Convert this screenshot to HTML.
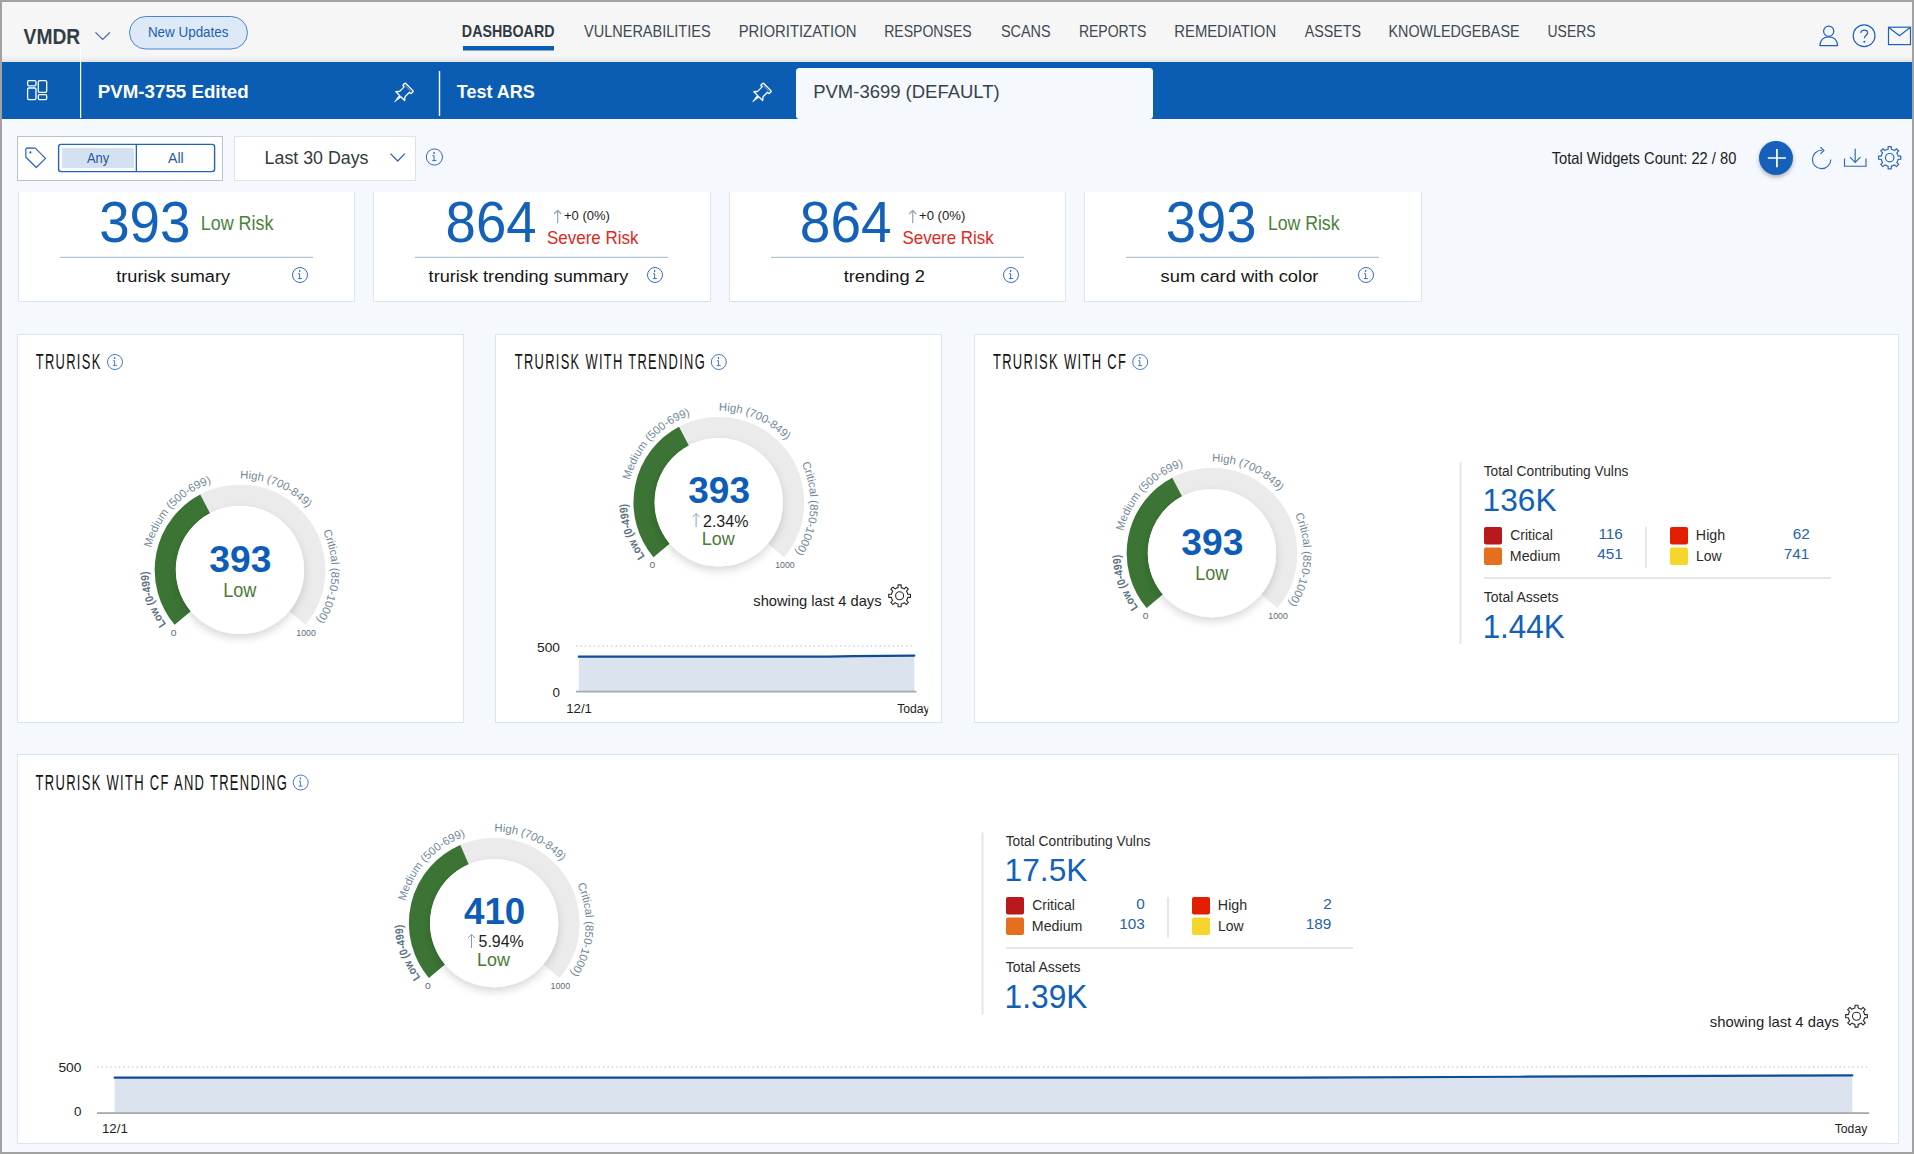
<!DOCTYPE html>
<html><head><meta charset="utf-8"><title>VMDR Dashboard</title>
<style>
html,body{margin:0;padding:0;}
body{width:1914px;height:1154px;overflow:hidden;background:#f5f8fc;position:relative;font-family:'Liberation Sans', sans-serif;}
.p{position:absolute;overflow:hidden;}
.p svg{position:absolute;left:0;top:0;display:block;font-family:'Liberation Sans', sans-serif;}
.hdr{background:#f6f6f6;}
.hdr:after{content:"";position:absolute;left:0;right:0;bottom:0;height:6px;background:linear-gradient(#f6f6f6,#e2e4e6);}
.hdr svg{z-index:1}
.frame{position:absolute;left:0;top:0;width:1914px;height:1154px;box-sizing:border-box;border:2px solid #a2a2a2;pointer-events:none;z-index:10;}
</style></head><body>
<svg width="0" height="0" style="position:absolute"><defs>
<filter id="gsh" x="-30%" y="-30%" width="160%" height="170%"><feDropShadow dx="0" dy="4" stdDeviation="4" flood-color="#000" flood-opacity="0.16"/></filter>
<filter id="bsh" x="-40%" y="-40%" width="180%" height="190%"><feDropShadow dx="0" dy="2" stdDeviation="2" flood-color="#000" flood-opacity="0.3"/></filter>
</defs></svg>
<div class="p hdr" style="left:2px;top:2px;width:1910px;height:60px;"><svg width="1910" height="60" viewBox="2 2 1910 60"><text x="23.60" y="44.20" font-size="21.80" fill="#333d47" font-weight="bold" textLength="56.67" lengthAdjust="spacingAndGlyphs">VMDR</text><path d="M95.5,32.3 L102.7,39.5 L109.9,32.3" fill="none" stroke="#3a64b0" stroke-width="1.2"/><rect x="129.5" y="16.5" width="118" height="32.5" rx="16.25" fill="#dde9f6" stroke="#4a86c8" stroke-width="1"/><text x="147.93" y="36.70" font-size="13.80" fill="#1f5fae" textLength="80.52" lengthAdjust="spacingAndGlyphs">New Updates</text><text x="461.87" y="37.40" font-size="17.00" fill="#2f3a44" font-weight="bold" textLength="92.63" lengthAdjust="spacingAndGlyphs">DASHBOARD</text><text x="584.00" y="37.40" font-size="17.00" fill="#3d4852" textLength="126.59" lengthAdjust="spacingAndGlyphs">VULNERABILITIES</text><text x="738.71" y="37.40" font-size="17.00" fill="#3d4852" textLength="117.82" lengthAdjust="spacingAndGlyphs">PRIORITIZATION</text><text x="884.18" y="37.40" font-size="17.00" fill="#3d4852" textLength="87.45" lengthAdjust="spacingAndGlyphs">RESPONSES</text><text x="1000.95" y="37.40" font-size="17.00" fill="#3d4852" textLength="49.63" lengthAdjust="spacingAndGlyphs">SCANS</text><text x="1078.88" y="37.40" font-size="17.00" fill="#3d4852" textLength="67.50" lengthAdjust="spacingAndGlyphs">REPORTS</text><text x="1174.31" y="37.40" font-size="17.00" fill="#3d4852" textLength="101.81" lengthAdjust="spacingAndGlyphs">REMEDIATION</text><text x="1304.70" y="37.40" font-size="17.00" fill="#3d4852" textLength="56.39" lengthAdjust="spacingAndGlyphs">ASSETS</text><text x="1388.56" y="37.40" font-size="17.00" fill="#3d4852" textLength="130.87" lengthAdjust="spacingAndGlyphs">KNOWLEDGEBASE</text><text x="1547.55" y="37.40" font-size="17.00" fill="#3d4852" textLength="48.01" lengthAdjust="spacingAndGlyphs">USERS</text><rect x="463" y="46" width="91" height="4.5" fill="#0b5db4"/><circle cx="1828.7" cy="31.3" r="5.1" fill="none" stroke="#1f5fb8" stroke-width="1.2"/><path d="M1819.9,45.6 C1820.3,39.8 1824,37 1828.7,37 C1833.4,37 1837.2,39.8 1837.6,45.6 Z" fill="none" stroke="#1f5fb8" stroke-width="1.2" stroke-linejoin="round"/><circle cx="1864.1" cy="35.7" r="10.9" fill="none" stroke="#1f5fb8" stroke-width="1.15"/><path d="M1860.9,32.9 C1860.9,30.9 1862.4,30.1 1864.2,30.1 C1866.2,30.1 1867.6,31.3 1867.6,32.9 C1867.6,35.1 1864.4,35.5 1864.4,38.3" fill="none" stroke="#1f5fb8" stroke-width="1.2"/><circle cx="1864.3" cy="41.7" r="1" fill="#1f5fb8"/><rect x="1888.5" y="27.2" width="22" height="17.4" fill="none" stroke="#1f5fb8" stroke-width="1.2"/><path d="M1888.8,27.5 L1899.5,35.8 L1910.2,27.5" fill="none" stroke="#1f5fb8" stroke-width="1.2"/><rect x="80" y="47" width="1" height="15" fill="#fff"/></svg></div><div class="p tabs" style="left:2px;top:62px;width:1910px;height:57px;background:#0b5db4"><svg width="1910" height="57" viewBox="2 62 1910 57"><rect x="796" y="68" width="357" height="51" rx="3.5" fill="#f5f8fc"/><rect x="27.6" y="80.6" width="8.4" height="5.2" rx="1.3" fill="none" stroke="#fff" stroke-width="1.3"/><rect x="27.6" y="88" width="8.4" height="11.6" rx="1.3" fill="none" stroke="#fff" stroke-width="1.3"/><rect x="38.3" y="80.6" width="8.4" height="11.8" rx="1.3" fill="none" stroke="#fff" stroke-width="1.3"/><rect x="38.3" y="94.6" width="8.4" height="5" rx="1.3" fill="none" stroke="#fff" stroke-width="1.3"/><rect x="80" y="62" width="1.2" height="56" fill="#fff"/><rect x="438.8" y="71" width="1.4" height="45" fill="#fff"/><g transform="translate(394.6,101.8) rotate(45)"><path d="M-1.1,-8 H-6.2 L-4.6,-9.9 C-4.2,-10.4 -3.8,-10.6 -3.8,-11.3 V-17.3 H-5.3 C-5.9,-17.3 -5.9,-17.6 -5.9,-18.2 V-19.9 C-5.9,-20.5 -5.6,-20.8 -5,-20.8 H5 C5.6,-20.8 5.9,-20.5 5.9,-19.9 V-18.2 C5.9,-17.6 5.6,-17.3 5,-17.3 H3.8 V-11.3 C3.8,-10.6 4.2,-10.4 4.6,-9.9 L6.2,-8 H1.1" fill="none" stroke="#fff" stroke-width="1.35" stroke-linejoin="round"/><path d="M-1.3,-8.2 L0,0 L1.3,-8.2 Z" fill="#fff" stroke="#fff" stroke-width="0.6" stroke-linejoin="round"/><path d="M-4.6,-19 H4.6" stroke="#fff" stroke-width="0.7" opacity="0.6"/></g><g transform="translate(752.6,101.8) rotate(45)"><path d="M-1.1,-8 H-6.2 L-4.6,-9.9 C-4.2,-10.4 -3.8,-10.6 -3.8,-11.3 V-17.3 H-5.3 C-5.9,-17.3 -5.9,-17.6 -5.9,-18.2 V-19.9 C-5.9,-20.5 -5.6,-20.8 -5,-20.8 H5 C5.6,-20.8 5.9,-20.5 5.9,-19.9 V-18.2 C5.9,-17.6 5.6,-17.3 5,-17.3 H3.8 V-11.3 C3.8,-10.6 4.2,-10.4 4.6,-9.9 L6.2,-8 H1.1" fill="none" stroke="#fff" stroke-width="1.35" stroke-linejoin="round"/><path d="M-1.3,-8.2 L0,0 L1.3,-8.2 Z" fill="#fff" stroke="#fff" stroke-width="0.6" stroke-linejoin="round"/><path d="M-4.6,-19 H4.6" stroke="#fff" stroke-width="0.7" opacity="0.6"/></g><text x="97.78" y="97.80" font-size="18.90" fill="#ffffff" font-weight="bold" textLength="150.91" lengthAdjust="spacingAndGlyphs">PVM-3755 Edited</text><text x="456.82" y="97.80" font-size="18.90" fill="#ffffff" font-weight="bold" textLength="77.88" lengthAdjust="spacingAndGlyphs">Test ARS</text><text x="813.22" y="98.20" font-size="18.90" fill="#36424d" textLength="186.41" lengthAdjust="spacingAndGlyphs">PVM-3699 (DEFAULT)</text></svg></div><div class="p fbar" style="left:0px;top:118px;width:1914px;height:74px;"><svg width="1914" height="74" viewBox="0 118 1914 74"><rect x="17.5" y="136.5" width="205" height="44" fill="#fff" stroke="#b8c3cc" stroke-width="1"/><path d="M25.8,149.5 C25.8,148.5 26.5,147.9 27.5,147.9 L35.3,148.1 L45.5,158.3 L36.3,167.5 L25.9,157.2 Z" fill="none" stroke="#2b63b6" stroke-width="1.2" stroke-linejoin="round"/><circle cx="30.4" cy="152.4" r="1.1" fill="#2b63b6"/><rect x="58.6" y="144.4" width="156" height="27.2" rx="2.5" fill="#fff" stroke="#1f63bd" stroke-width="1.4"/><rect x="62" y="148" width="72" height="20" fill="#d3e1f0"/><rect x="135.7" y="144.4" width="1.3" height="27.2" fill="#1f63bd"/><text x="86.90" y="162.90" font-size="14.70" fill="#27599e" textLength="22.28" lengthAdjust="spacingAndGlyphs">Any</text><text x="168.00" y="162.90" font-size="14.70" fill="#27599e" textLength="15.67" lengthAdjust="spacingAndGlyphs">All</text><rect x="234.5" y="136.5" width="181" height="44" fill="#fff" stroke="#dde3ea" stroke-width="1"/><text x="264.57" y="164.10" font-size="18.90" fill="#333a40" textLength="103.98" lengthAdjust="spacingAndGlyphs">Last 30 Days</text><path d="M390.5,153.6 L397.7,161 L404.9,153.6" fill="none" stroke="#3a64b0" stroke-width="1.3"/><circle cx="434.4" cy="157" r="8.1" fill="none" stroke="#3566b5" stroke-width="1"/><path d="M434.04999999999995,152.4 V153.6" stroke="#3566b5" stroke-width="1.3" stroke-linecap="round"/><path d="M432.5,155.7 H434.04999999999995 V160.5 M432.29999999999995,160.6 H436.29999999999995" fill="none" stroke="#3566b5" stroke-width="1"/><text x="1551.71" y="163.50" font-size="16.50" fill="#1c1c1c" textLength="184.65" lengthAdjust="spacingAndGlyphs">Total Widgets Count: 22 / 80</text><circle cx="1776" cy="158" r="17" fill="#1461b9" filter="url(#bsh)"/><path d="M1767.8,158 H1786 M1776.9,149 V167.2" stroke="#fff" stroke-width="1.7"/><path d="M1822,150.3 A9.2,9.2 0 1 0 1830.8,159.6" fill="none" stroke="#2e66b8" stroke-width="1.15"/><path d="M1820.4,147.1 L1823.9,150.5 L1820.4,153.9" fill="none" stroke="#2e66b8" stroke-width="1.15"/><path d="M1844.5,158.4 V166.2 H1866 V158.4 M1855.2,148.8 V162.4 M1850,157.2 L1855.2,162.4 L1860.4,157.2" fill="none" stroke="#2e66b8" stroke-width="1.15"/><path d="M1897.65,154.41 L1898.14,156.06 L1900.79,156.14 L1900.79,159.26 L1898.14,159.34 L1897.65,160.99 L1896.83,162.51 L1898.64,164.44 L1896.44,166.64 L1894.51,164.83 L1892.99,165.65 L1891.34,166.14 L1891.26,168.79 L1888.14,168.79 L1888.06,166.14 L1886.41,165.65 L1884.89,164.83 L1882.96,166.64 L1880.76,164.44 L1882.57,162.51 L1881.75,160.99 L1881.26,159.34 L1878.61,159.26 L1878.61,156.14 L1881.26,156.06 L1881.75,154.41 L1882.57,152.89 L1880.76,150.96 L1882.96,148.76 L1884.89,150.57 L1886.41,149.75 L1888.06,149.26 L1888.14,146.61 L1891.26,146.61 L1891.34,149.26 L1892.99,149.75 L1894.51,150.57 L1896.44,148.76 L1898.64,150.96 L1896.83,152.89Z" fill="none" stroke="#2e66b8" stroke-width="1.2" stroke-linejoin="round"/><circle cx="1889.7" cy="157.7" r="4.2" fill="none" stroke="#2e66b8" stroke-width="1.2"/></svg></div><div class="p sum" style="left:0px;top:192px;width:1914px;height:112px;"><svg width="1914" height="112" viewBox="0 192 1914 112"><path d="M18.5,192 V301.5 H354.5 V192" fill="#fff" stroke="#d8e5f3" stroke-width="1"/><text x="99.18" y="241.80" font-size="56.50" fill="#1461ba" textLength="91.30" lengthAdjust="spacingAndGlyphs">393</text><text x="200.77" y="230.00" font-size="19.50" fill="#4c7f3c" textLength="72.67" lengthAdjust="spacingAndGlyphs">Low Risk</text><rect x="60" y="256.8" width="253" height="1.2" fill="#b3c2cf"/><text x="116.23" y="281.70" font-size="17.40" fill="#151515" textLength="113.85" lengthAdjust="spacingAndGlyphs">trurisk sumary</text><circle cx="300" cy="275" r="7.5" fill="none" stroke="#3c6dbf" stroke-width="1"/><path d="M299.65,270.4 V271.6" stroke="#3c6dbf" stroke-width="1.3" stroke-linecap="round"/><path d="M298.1,273.7 H299.65 V278.5 M297.9,278.6 H301.9" fill="none" stroke="#3c6dbf" stroke-width="1"/><path d="M373.5,192 V301.5 H710.5 V192" fill="#fff" stroke="#d8e5f3" stroke-width="1"/><text x="445.62" y="241.80" font-size="56.50" fill="#1461ba" textLength="91.04" lengthAdjust="spacingAndGlyphs">864</text><path d="M557.7,223.3 V210.5 M554.1,214 L557.7,210.3 L561.3000000000001,214" fill="none" stroke="#8ea4b6" stroke-width="1.2"/><text x="564.02" y="219.60" font-size="13.70" fill="#1e1e1e" textLength="45.75" lengthAdjust="spacingAndGlyphs">+0 (0%)</text><text x="547.04" y="244.30" font-size="18.50" fill="#e0281c" textLength="91.39" lengthAdjust="spacingAndGlyphs">Severe Risk</text><rect x="415" y="256.8" width="253" height="1.2" fill="#b3c2cf"/><text x="428.63" y="281.70" font-size="17.40" fill="#151515" textLength="199.64" lengthAdjust="spacingAndGlyphs">trurisk trending summary</text><circle cx="655" cy="275" r="7.5" fill="none" stroke="#3c6dbf" stroke-width="1"/><path d="M654.65,270.4 V271.6" stroke="#3c6dbf" stroke-width="1.3" stroke-linecap="round"/><path d="M653.1,273.7 H654.65 V278.5 M652.9,278.6 H656.9" fill="none" stroke="#3c6dbf" stroke-width="1"/><path d="M729.5,192 V301.5 H1065.5 V192" fill="#fff" stroke="#d8e5f3" stroke-width="1"/><text x="799.80" y="241.80" font-size="56.50" fill="#1461ba" textLength="91.77" lengthAdjust="spacingAndGlyphs">864</text><path d="M912.7,223.3 V210.5 M909.1,214 L912.7,210.3 L916.3000000000001,214" fill="none" stroke="#8ea4b6" stroke-width="1.2"/><text x="919.01" y="219.60" font-size="13.70" fill="#1e1e1e" textLength="46.27" lengthAdjust="spacingAndGlyphs">+0 (0%)</text><text x="902.44" y="244.30" font-size="18.50" fill="#e0281c" textLength="91.39" lengthAdjust="spacingAndGlyphs">Severe Risk</text><rect x="771" y="256.8" width="253" height="1.2" fill="#b3c2cf"/><text x="843.73" y="281.70" font-size="17.40" fill="#151515" textLength="81.15" lengthAdjust="spacingAndGlyphs">trending 2</text><circle cx="1011" cy="275" r="7.5" fill="none" stroke="#3c6dbf" stroke-width="1"/><path d="M1010.65,270.4 V271.6" stroke="#3c6dbf" stroke-width="1.3" stroke-linecap="round"/><path d="M1009.1,273.7 H1010.65 V278.5 M1008.9,278.6 H1012.9" fill="none" stroke="#3c6dbf" stroke-width="1"/><path d="M1084.5,192 V301.5 H1421.5 V192" fill="#fff" stroke="#d8e5f3" stroke-width="1"/><text x="1165.80" y="241.80" font-size="56.50" fill="#1461ba" textLength="90.77" lengthAdjust="spacingAndGlyphs">393</text><text x="1267.89" y="230.00" font-size="19.50" fill="#4c7f3c" textLength="71.66" lengthAdjust="spacingAndGlyphs">Low Risk</text><rect x="1126" y="256.8" width="253" height="1.2" fill="#b3c2cf"/><text x="1160.54" y="281.70" font-size="17.40" fill="#151515" textLength="157.91" lengthAdjust="spacingAndGlyphs">sum card with color</text><circle cx="1366" cy="275" r="7.5" fill="none" stroke="#3c6dbf" stroke-width="1"/><path d="M1365.65,270.4 V271.6" stroke="#3c6dbf" stroke-width="1.3" stroke-linecap="round"/><path d="M1364.1,273.7 H1365.65 V278.5 M1363.9,278.6 H1367.9" fill="none" stroke="#3c6dbf" stroke-width="1"/></svg></div><div class="p w" style="left:17px;top:334px;width:447px;height:389px;"><svg width="447" height="389" viewBox="17 334 447 389"><rect x="17.5" y="334.5" width="446" height="388" fill="#fff" stroke="#d8e5f3" stroke-width="1"/><text transform="translate(35.74,369) scale(0.5934,1)" font-size="21.8" fill="#141414" letter-spacing="2.191">TRURISK</text><circle cx="115" cy="362" r="7.5" fill="none" stroke="#4a78c4" stroke-width="1"/><path d="M114.65,357.4 V358.6" stroke="#4a78c4" stroke-width="1.3" stroke-linecap="round"/><path d="M113.1,360.7 H114.65 V365.5 M112.9,365.6 H116.9" fill="none" stroke="#4a78c4" stroke-width="1"/><path d="M182.70,618.08 A74.8,74.8 0 1 1 297.30,618.08" fill="none" stroke="#ebebeb" stroke-width="21"/><path d="M182.70,618.08 A74.8,74.8 0 0 1 205.09,503.85" fill="none" stroke="#3b7434" stroke-width="21"/><circle cx="240" cy="570" r="64" fill="#fff" filter="url(#gsh)"/><path id="gp240_570" d="M169.91,628.82 A91.5,91.5 0 1 1 310.09,628.82" fill="none"/><text font-size="11.3" fill="#5a7083" font-weight="bold"><textPath href="#gp240_570" startOffset="5.9" textLength="56.5" lengthAdjust="spacingAndGlyphs">Low (0-499)</textPath></text><text font-size="11.3" fill="#71879a"><textPath href="#gp240_570" startOffset="85.9">Medium (500-699)</textPath></text><text font-size="11.3" fill="#71879a"><textPath href="#gp240_570" startOffset="207.3">High (700-849)</textPath></text><text font-size="11.3" fill="#71879a"><textPath href="#gp240_570" startOffset="310.9">Critical (850-1000)</textPath></text><text x="170.84" y="635.50" font-size="9.80" fill="#5d6b7a" textLength="5.73" lengthAdjust="spacingAndGlyphs">0</text><text x="296.34" y="635.50" font-size="9.80" fill="#5d6b7a" textLength="19.56" lengthAdjust="spacingAndGlyphs">1000</text><text x="209.25" y="572.00" font-size="37.00" fill="#0d5cb6" font-weight="bold" textLength="62.18" lengthAdjust="spacingAndGlyphs">393</text><text x="223.15" y="597.00" font-size="19.30" fill="#4a7a36" textLength="33.24" lengthAdjust="spacingAndGlyphs">Low</text></svg></div><div class="p w" style="left:495px;top:334px;width:447px;height:389px;"><svg width="447" height="389" viewBox="495 334 447 389"><rect x="495.5" y="334.5" width="446" height="388" fill="#fff" stroke="#d8e5f3" stroke-width="1"/><text transform="translate(514.74,369) scale(0.5926,1)" font-size="21.8" fill="#141414" letter-spacing="2.194">TRURISK WITH TRENDING</text><circle cx="718.8" cy="362" r="7.5" fill="none" stroke="#4a78c4" stroke-width="1"/><path d="M718.4499999999999,357.4 V358.6" stroke="#4a78c4" stroke-width="1.3" stroke-linecap="round"/><path d="M716.9,360.7 H718.4499999999999 V365.5 M716.6999999999999,365.6 H720.6999999999999" fill="none" stroke="#4a78c4" stroke-width="1"/><path d="M661.50,550.38 A74.8,74.8 0 1 1 776.10,550.38" fill="none" stroke="#ebebeb" stroke-width="21"/><path d="M661.50,550.38 A74.8,74.8 0 0 1 683.89,436.15" fill="none" stroke="#3b7434" stroke-width="21"/><circle cx="718.8" cy="502.3" r="64" fill="#fff" filter="url(#gsh)"/><path id="gp718_502" d="M648.71,561.12 A91.5,91.5 0 1 1 788.89,561.12" fill="none"/><text font-size="11.3" fill="#5a7083" font-weight="bold"><textPath href="#gp718_502" startOffset="5.9" textLength="56.5" lengthAdjust="spacingAndGlyphs">Low (0-499)</textPath></text><text font-size="11.3" fill="#71879a"><textPath href="#gp718_502" startOffset="85.9">Medium (500-699)</textPath></text><text font-size="11.3" fill="#71879a"><textPath href="#gp718_502" startOffset="207.3">High (700-849)</textPath></text><text font-size="11.3" fill="#71879a"><textPath href="#gp718_502" startOffset="310.9">Critical (850-1000)</textPath></text><text x="649.64" y="567.80" font-size="9.80" fill="#5d6b7a" textLength="5.73" lengthAdjust="spacingAndGlyphs">0</text><text x="775.14" y="567.80" font-size="9.80" fill="#5d6b7a" textLength="19.56" lengthAdjust="spacingAndGlyphs">1000</text><text x="688.31" y="503.10" font-size="36.50" fill="#0d5cb6" font-weight="bold" textLength="61.66" lengthAdjust="spacingAndGlyphs">393</text><path d="M696.0999999999999,527.1 V513.7 M692.4999999999999,517.2 L696.0999999999999,513.5 L699.6999999999999,517.2" fill="none" stroke="#8a9fb2" stroke-width="1.0"/><text x="703.00" y="526.50" font-size="16.00" fill="#1e1e1e" textLength="45.37" lengthAdjust="spacingAndGlyphs">2.34%</text><text x="701.71" y="545.30" font-size="18.50" fill="#4a7a36" textLength="32.93" lengthAdjust="spacingAndGlyphs">Low</text><text x="753.33" y="605.50" font-size="14.60" fill="#1e1e1e" textLength="128.21" lengthAdjust="spacingAndGlyphs">showing last 4 days</text><path d="M907.27,592.62 L907.75,594.22 L910.49,594.27 L910.49,597.33 L907.75,597.38 L907.27,598.98 L906.48,600.44 L908.38,602.42 L906.22,604.58 L904.24,602.68 L902.78,603.47 L901.18,603.95 L901.13,606.69 L898.07,606.69 L898.02,603.95 L896.42,603.47 L894.96,602.68 L892.98,604.58 L890.82,602.42 L892.72,600.44 L891.93,598.98 L891.45,597.38 L888.71,597.33 L888.71,594.27 L891.45,594.22 L891.93,592.62 L892.72,591.16 L890.82,589.18 L892.98,587.02 L894.96,588.92 L896.42,588.13 L898.02,587.65 L898.07,584.91 L901.13,584.91 L901.18,587.65 L902.78,588.13 L904.24,588.92 L906.22,587.02 L908.38,589.18 L906.48,591.16Z" fill="none" stroke="#2a2a2a" stroke-width="1.1" stroke-linejoin="round"/><circle cx="899.6" cy="595.8" r="4" fill="none" stroke="#2a2a2a" stroke-width="1.1"/><line x1="576" y1="646" x2="915" y2="646" stroke="#c9ced4" stroke-width="1.3" stroke-dasharray="1.3 3.1"/><path d="M578.8,691.5 V656.7 L806.9399999999999,656.7 C849.8839999999999,656.7 860.6199999999999,655.6 914.3,655.6 V691.5 Z" fill="#dbe4ee"/><path d="M578.8,656.7 L806.9399999999999,656.7 C849.8839999999999,656.7 860.6199999999999,655.6 914.3,655.6" fill="none" stroke="#0f4c97" stroke-width="2.2" stroke-linecap="round"/><rect x="576" y="690.7" width="340.5" height="1.8" fill="#a8a8a8"/><text x="537.05" y="651.60" font-size="13.40" fill="#1e1e1e" textLength="22.98" lengthAdjust="spacingAndGlyphs">500</text><text x="552.53" y="696.60" font-size="13.40" fill="#1e1e1e">0</text><text x="566.21" y="713.00" font-size="12.30" fill="#1e1e1e" textLength="25.70" lengthAdjust="spacingAndGlyphs">12/1</text><svg x="880" y="695" width="48.2" height="25" viewBox="880 695 48.2 25" overflow="hidden"><text x="897.16" y="713.00" font-size="12.30" fill="#1e1e1e" textLength="32.53" lengthAdjust="spacingAndGlyphs">Today</text></svg></svg></div><div class="p w" style="left:974px;top:334px;width:925px;height:389px;"><svg width="925" height="389" viewBox="974 334 925 389"><rect x="974.5" y="334.5" width="924" height="388" fill="#fff" stroke="#d8e5f3" stroke-width="1"/><text transform="translate(992.94,369) scale(0.5959,1)" font-size="21.8" fill="#141414" letter-spacing="2.181">TRURISK WITH CF</text><circle cx="1140.2" cy="362" r="7.5" fill="none" stroke="#4a78c4" stroke-width="1"/><path d="M1139.8500000000001,357.4 V358.6" stroke="#4a78c4" stroke-width="1.3" stroke-linecap="round"/><path d="M1138.3,360.7 H1139.8500000000001 V365.5 M1138.1000000000001,365.6 H1142.1000000000001" fill="none" stroke="#4a78c4" stroke-width="1"/><path d="M1154.70,601.28 A74.8,74.8 0 1 1 1269.30,601.28" fill="none" stroke="#ebebeb" stroke-width="21"/><path d="M1154.70,601.28 A74.8,74.8 0 0 1 1177.09,487.05" fill="none" stroke="#3b7434" stroke-width="21"/><circle cx="1212" cy="553.2" r="64" fill="#fff" filter="url(#gsh)"/><path id="gp1212_553" d="M1141.91,612.02 A91.5,91.5 0 1 1 1282.09,612.02" fill="none"/><text font-size="11.3" fill="#5a7083" font-weight="bold"><textPath href="#gp1212_553" startOffset="5.9" textLength="56.5" lengthAdjust="spacingAndGlyphs">Low (0-499)</textPath></text><text font-size="11.3" fill="#71879a"><textPath href="#gp1212_553" startOffset="85.9">Medium (500-699)</textPath></text><text font-size="11.3" fill="#71879a"><textPath href="#gp1212_553" startOffset="207.3">High (700-849)</textPath></text><text font-size="11.3" fill="#71879a"><textPath href="#gp1212_553" startOffset="310.9">Critical (850-1000)</textPath></text><text x="1142.84" y="618.70" font-size="9.80" fill="#5d6b7a" textLength="5.73" lengthAdjust="spacingAndGlyphs">0</text><text x="1268.34" y="618.70" font-size="9.80" fill="#5d6b7a" textLength="19.56" lengthAdjust="spacingAndGlyphs">1000</text><text x="1181.25" y="555.20" font-size="37.00" fill="#0d5cb6" font-weight="bold" textLength="62.18" lengthAdjust="spacingAndGlyphs">393</text><text x="1195.15" y="580.20" font-size="19.30" fill="#4a7a36" textLength="33.24" lengthAdjust="spacingAndGlyphs">Low</text><rect x="1459.5" y="462" width="2" height="182" fill="#e2e7ec"/><text x="1483.72" y="476.00" font-size="13.80" fill="#2b2b2b" textLength="144.75" lengthAdjust="spacingAndGlyphs">Total Contributing Vulns</text><text x="1482.63" y="510.50" font-size="31.50" fill="#1260b8" textLength="73.85" lengthAdjust="spacingAndGlyphs">136K</text><rect x="1484" y="527" width="18" height="17.5" rx="2" fill="#b8191a"/><rect x="1484" y="547.5" width="18" height="17.5" rx="2" fill="#e46f1f"/><rect x="1670" y="527" width="18" height="17.5" rx="2" fill="#e21d00"/><rect x="1670" y="547.5" width="18" height="17.5" rx="2" fill="#f6d62a"/><text x="1510.30" y="540.00" font-size="14.80" fill="#2b2b2b" textLength="42.54" lengthAdjust="spacingAndGlyphs">Critical</text><text x="1509.86" y="560.80" font-size="14.80" fill="#2b2b2b" textLength="50.51" lengthAdjust="spacingAndGlyphs">Medium</text><text x="1695.86" y="540.00" font-size="14.80" fill="#2b2b2b" textLength="29.32" lengthAdjust="spacingAndGlyphs">High</text><text x="1695.88" y="560.80" font-size="14.80" fill="#2b2b2b" textLength="25.61" lengthAdjust="spacingAndGlyphs">Low</text><text x="1598.41" y="539.00" font-size="15.30" fill="#2762a8">116</text><text x="1597.21" y="558.60" font-size="15.30" fill="#2762a8">451</text><text x="1792.71" y="539.00" font-size="15.30" fill="#2762a8">62</text><text x="1783.71" y="558.60" font-size="15.30" fill="#2762a8">741</text><rect x="1645" y="527" width="2" height="41" fill="#e2e7ec"/><rect x="1484" y="577" width="347" height="2" fill="#e2e7ec"/><text x="1483.72" y="601.80" font-size="13.80" fill="#2b2b2b" textLength="74.79" lengthAdjust="spacingAndGlyphs">Total Assets</text><text x="1482.64" y="637.60" font-size="32.50" fill="#1260b8" textLength="82.22" lengthAdjust="spacingAndGlyphs">1.44K</text></svg></div><div class="p w" style="left:17px;top:754px;width:1882px;height:390px;"><svg width="1882" height="390" viewBox="17 754 1882 390"><rect x="17.5" y="754.5" width="1881" height="389" fill="#fff" stroke="#d8e5f3" stroke-width="1"/><text transform="translate(35.54,789.5) scale(0.5960,1)" font-size="21.8" fill="#141414" letter-spacing="2.181">TRURISK WITH CF AND TRENDING</text><circle cx="300.7" cy="782.5" r="7.5" fill="none" stroke="#4a78c4" stroke-width="1"/><path d="M300.34999999999997,777.9 V779.1" stroke="#4a78c4" stroke-width="1.3" stroke-linecap="round"/><path d="M298.8,781.2 H300.34999999999997 V786.0 M298.59999999999997,786.1 H302.59999999999997" fill="none" stroke="#4a78c4" stroke-width="1"/><path d="M436.90,971.28 A74.8,74.8 0 1 1 551.50,971.28" fill="none" stroke="#ebebeb" stroke-width="21"/><path d="M436.90,971.28 A74.8,74.8 0 0 1 464.49,854.55" fill="none" stroke="#3b7434" stroke-width="21"/><circle cx="494.2" cy="923.2" r="64" fill="#fff" filter="url(#gsh)"/><path id="gp494_923" d="M424.11,982.02 A91.5,91.5 0 1 1 564.29,982.02" fill="none"/><text font-size="11.3" fill="#5a7083" font-weight="bold"><textPath href="#gp494_923" startOffset="5.9" textLength="56.5" lengthAdjust="spacingAndGlyphs">Low (0-499)</textPath></text><text font-size="11.3" fill="#71879a"><textPath href="#gp494_923" startOffset="85.9">Medium (500-699)</textPath></text><text font-size="11.3" fill="#71879a"><textPath href="#gp494_923" startOffset="207.3">High (700-849)</textPath></text><text font-size="11.3" fill="#71879a"><textPath href="#gp494_923" startOffset="310.9">Critical (850-1000)</textPath></text><text x="425.04" y="988.70" font-size="9.80" fill="#5d6b7a" textLength="5.73" lengthAdjust="spacingAndGlyphs">0</text><text x="550.54" y="988.70" font-size="9.80" fill="#5d6b7a" textLength="19.56" lengthAdjust="spacingAndGlyphs">1000</text><text x="463.90" y="924.00" font-size="36.50" fill="#0d5cb6" font-weight="bold" textLength="61.47" lengthAdjust="spacingAndGlyphs">410</text><path d="M471.5,948.0 V934.6 M467.9,938.1 L471.5,934.4 L475.1,938.1" fill="none" stroke="#8a9fb2" stroke-width="1.0"/><text x="478.56" y="947.40" font-size="16.00" fill="#1e1e1e" textLength="45.20" lengthAdjust="spacingAndGlyphs">5.94%</text><text x="477.11" y="966.20" font-size="18.50" fill="#4a7a36" textLength="32.93" lengthAdjust="spacingAndGlyphs">Low</text><rect x="981.5" y="832.5" width="2" height="182.0" fill="#e2e7ec"/><text x="1005.72" y="846.00" font-size="13.80" fill="#2b2b2b" textLength="144.75" lengthAdjust="spacingAndGlyphs">Total Contributing Vulns</text><text x="1004.62" y="880.50" font-size="31.50" fill="#1260b8" textLength="82.84" lengthAdjust="spacingAndGlyphs">17.5K</text><rect x="1006" y="897" width="18" height="17.5" rx="2" fill="#b8191a"/><rect x="1006" y="917.5" width="18" height="17.5" rx="2" fill="#e46f1f"/><rect x="1192" y="897" width="18" height="17.5" rx="2" fill="#e21d00"/><rect x="1192" y="917.5" width="18" height="17.5" rx="2" fill="#f6d62a"/><text x="1032.30" y="910.00" font-size="14.80" fill="#2b2b2b" textLength="42.54" lengthAdjust="spacingAndGlyphs">Critical</text><text x="1031.86" y="930.80" font-size="14.80" fill="#2b2b2b" textLength="50.51" lengthAdjust="spacingAndGlyphs">Medium</text><text x="1217.86" y="910.00" font-size="14.80" fill="#2b2b2b" textLength="29.32" lengthAdjust="spacingAndGlyphs">High</text><text x="1217.88" y="930.80" font-size="14.80" fill="#2b2b2b" textLength="25.61" lengthAdjust="spacingAndGlyphs">Low</text><text x="1136.24" y="909.00" font-size="15.30" fill="#2762a8">0</text><text x="1119.14" y="928.60" font-size="15.30" fill="#2762a8">103</text><text x="1323.20" y="909.00" font-size="15.30" fill="#2762a8">2</text><text x="1305.71" y="928.60" font-size="15.30" fill="#2762a8">189</text><rect x="1167" y="897" width="2" height="41" fill="#e2e7ec"/><rect x="1006" y="947" width="347" height="2" fill="#e2e7ec"/><text x="1005.72" y="971.80" font-size="13.80" fill="#2b2b2b" textLength="74.79" lengthAdjust="spacingAndGlyphs">Total Assets</text><text x="1004.62" y="1007.60" font-size="32.50" fill="#1260b8" textLength="82.84" lengthAdjust="spacingAndGlyphs">1.39K</text><text x="1709.83" y="1027.00" font-size="14.60" fill="#1e1e1e" textLength="129.12" lengthAdjust="spacingAndGlyphs">showing last 4 days</text><path d="M1864.17,1013.02 L1864.65,1014.62 L1867.39,1014.67 L1867.39,1017.73 L1864.65,1017.78 L1864.17,1019.38 L1863.38,1020.84 L1865.28,1022.82 L1863.12,1024.98 L1861.14,1023.08 L1859.68,1023.87 L1858.08,1024.35 L1858.03,1027.09 L1854.97,1027.09 L1854.92,1024.35 L1853.32,1023.87 L1851.86,1023.08 L1849.88,1024.98 L1847.72,1022.82 L1849.62,1020.84 L1848.83,1019.38 L1848.35,1017.78 L1845.61,1017.73 L1845.61,1014.67 L1848.35,1014.62 L1848.83,1013.02 L1849.62,1011.56 L1847.72,1009.58 L1849.88,1007.42 L1851.86,1009.32 L1853.32,1008.53 L1854.92,1008.05 L1854.97,1005.31 L1858.03,1005.31 L1858.08,1008.05 L1859.68,1008.53 L1861.14,1009.32 L1863.12,1007.42 L1865.28,1009.58 L1863.38,1011.56Z" fill="none" stroke="#2a2a2a" stroke-width="1.1" stroke-linejoin="round"/><circle cx="1856.5" cy="1016.2" r="4" fill="none" stroke="#2a2a2a" stroke-width="1.1"/><line x1="97" y1="1067" x2="1867.6" y2="1067" stroke="#c9ced4" stroke-width="1.3" stroke-dasharray="1.3 3.1"/><path d="M114.6,1113 V1077.6 L1296.236,1077.6 C1518.6616000000001,1077.6 1574.268,1075.4 1852.3,1075.4 V1113 Z" fill="#dbe4ee"/><path d="M114.6,1077.6 L1296.236,1077.6 C1518.6616000000001,1077.6 1574.268,1075.4 1852.3,1075.4" fill="none" stroke="#0f4c97" stroke-width="2.2" stroke-linecap="round"/><rect x="97" y="1112.2" width="1772.1" height="1.8" fill="#a8a8a8"/><text x="58.45" y="1071.80" font-size="13.40" fill="#1e1e1e" textLength="22.98" lengthAdjust="spacingAndGlyphs">500</text><text x="73.93" y="1116.30" font-size="13.40" fill="#1e1e1e">0</text><text x="101.90" y="1132.80" font-size="12.30" fill="#1e1e1e" textLength="25.92" lengthAdjust="spacingAndGlyphs">12/1</text><text x="1834.76" y="1132.80" font-size="12.30" fill="#1e1e1e" textLength="32.53" lengthAdjust="spacingAndGlyphs">Today</text></svg></div>
<div class="frame"></div>
</body></html>
